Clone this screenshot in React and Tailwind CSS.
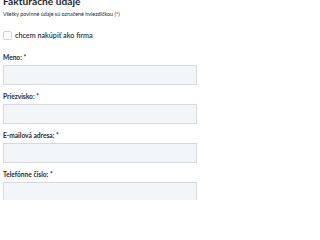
import React from "react";

const FIELDS = ["Meno: *", "Priezvisko: *", "E-mailová adresa: *", "Telefónne číslo: *"];

export default function App() {
    return (
        <div className="w-[200px] h-[200px] overflow-hidden bg-white px-[3px] text-[#25282f] font-['Lato','Open_Sans',sans-serif]">
            {/* header */}
            <h2 className="-mt-[4px] text-[10.2px] leading-[10px] font-bold">
                Fakturačné údaje
            </h2>
            <p className="mt-[5px] text-[5.4px] leading-[6px]">
                Všetky povinné údaje sú označené hviezdičkou (*)
            </p>

            {/* company checkbox */}
            <label className="mt-[14px] flex items-center gap-[3px] h-[9px]">
                <span className="w-[9px] h-[9px] rounded-[2px] border border-[#cfd3d8] bg-white" />
                <span className="text-[7.2px] leading-[9px] font-semibold text-[#2e3138]">
                    chcem nakúpiť ako firma
                </span>
            </label>

            {/* fields */}
            <div className="mt-[13px] flex flex-col gap-[7px]">
                {FIELDS.map((label) => (
                    <div key={label} className="flex flex-col gap-[4px]">
                        <span className="text-[6.6px] leading-[8px] font-bold">{label}</span>
                        <div className="h-[20px] w-[194px] border border-[#d6dadf] bg-[#f3f6f8]" />
                    </div>
                ))}
            </div>
        </div>
    );
}
